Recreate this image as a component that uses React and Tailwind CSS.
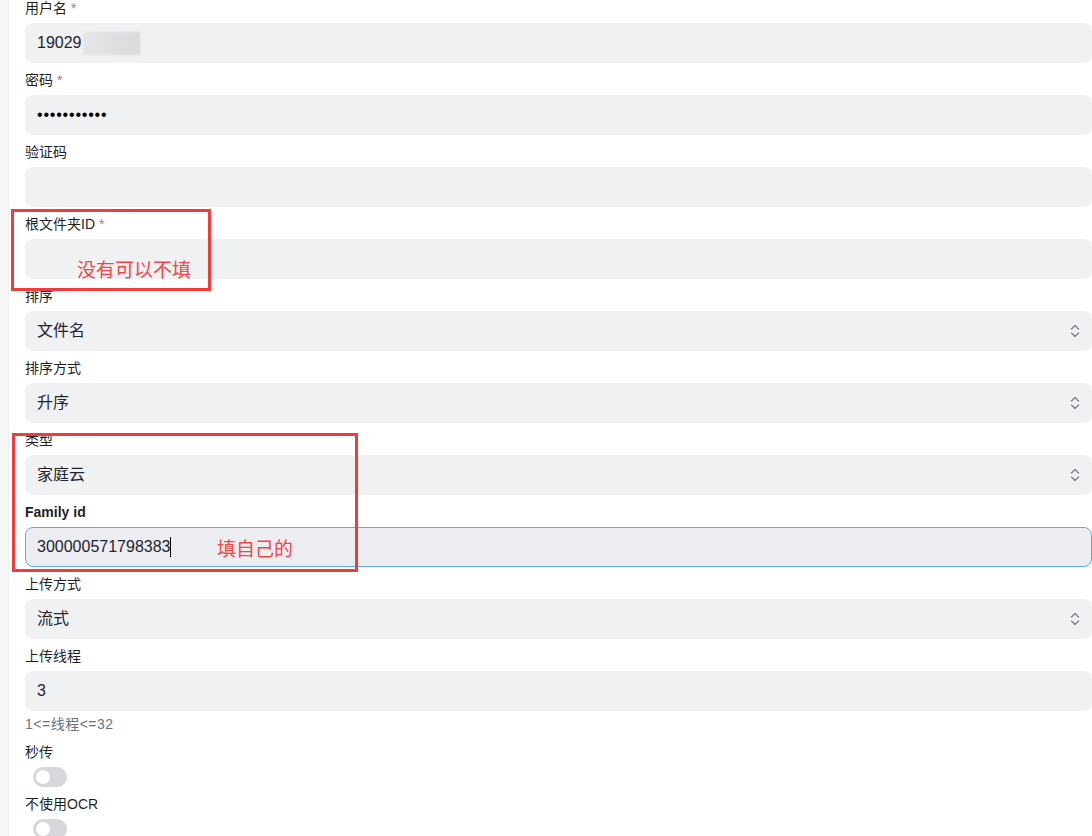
import React from "react";

const font = { fontFamily: '"Liberation Sans", "Noto Sans CJK SC", sans-serif' };

function Label({ children, required, bold }) {
  return (
    <div className={`h-5 leading-5 text-[14px] text-[#1f1f1f] ${bold ? "font-bold" : ""}`}>
      {children}
      {required && <span className="ml-1 text-[#f05a5a]">*</span>}
    </div>
  );
}

function Chevrons() {
  return (
    <svg width="10" height="14" viewBox="0 0 10 14" fill="none" stroke="#7b818a" strokeWidth="1.4" strokeLinecap="round" strokeLinejoin="round">
      <path d="M1.5 5 L5 1.5 L8.5 5" />
      <path d="M1.5 9 L5 12.5 L8.5 9" />
    </svg>
  );
}

function Field({ label, required, bold, children, last }) {
  return (
    <div className={last ? "" : "mb-[7px]"}>
      <Label required={required} bold={bold}>{label}</Label>
      <div className="mt-[5px]">{children}</div>
    </div>
  );
}

function TextBox({ children, focused }) {
  return (
    <div
      className={`h-10 rounded-lg px-3 flex items-center text-[16px] text-[#1f2430] ${
        focused ? "bg-[#ebedf0] border border-[#63a8e8] pl-[11px]" : "bg-[#f0f1f3]"
      }`}
    >
      {children}
    </div>
  );
}

function SelectBox({ value }) {
  return (
    <div className="h-10 rounded-lg bg-[#f0f1f3] pl-3 pr-[12px] flex items-center justify-between text-[16px] text-[#1f2430]">
      <span>{value}</span>
      <Chevrons />
    </div>
  );
}

function Toggle() {
  return (
    <div className="ml-2 w-[34px] h-5 rounded-full bg-[#d5d7db] flex items-center">
      <div className="ml-[3px] w-[14px] h-[14px] rounded-full bg-white" />
    </div>
  );
}

export default function App() {
  return (
    <div className="relative h-[836px] overflow-hidden bg-white flex" style={font}>
      <div className="w-[9px] shrink-0 bg-[#f8f8f9] border-r border-[#efeff0]" />
      <div className="flex-1 pl-4 -mt-[2px]">
        <Field label="用户名" required>
          <TextBox>
            <span>19029</span>
            <span className="ml-[1px] w-[57px] h-[23px] bg-gradient-to-r from-[#e6e6e8] to-[#d9d9db] blur-[1px]" />
          </TextBox>
        </Field>
        <Field label="密码" required>
          <TextBox>
            <span className="tracking-[0.8px] text-black">•••••••••••</span>
          </TextBox>
        </Field>
        <Field label="验证码">
          <TextBox />
        </Field>
        <Field label="根文件夹ID" required>
          <TextBox />
        </Field>
        <Field label="排序">
          <SelectBox value="文件名" />
        </Field>
        <Field label="排序方式">
          <SelectBox value="升序" />
        </Field>
        <Field label="类型">
          <SelectBox value="家庭云" />
        </Field>
        <Field label="Family id" bold>
          <TextBox focused>
            <span>300000571798383</span>
            <span className="w-px h-5 bg-black" />
          </TextBox>
        </Field>
        <Field label="上传方式">
          <SelectBox value="流式" />
        </Field>
        <Field label="上传线程" last>
          <TextBox>3</TextBox>
        </Field>
        <div className="mt-[5px] h-4 leading-4 text-[14px] tracking-[0.5px] text-[#6b7280]">1&lt;=线程&lt;=32</div>
        <div className="mt-[10px]">
          <Label>秒传</Label>
          <div className="mt-[5px]"><Toggle /></div>
        </div>
        <div className="mt-[7px]">
          <Label>不使用OCR</Label>
          <div className="mt-[5px]"><Toggle /></div>
        </div>
      </div>

      {/* annotations */}
      <div className="absolute left-[11px] top-[209px] w-[200px] h-[82px] border-[3px] border-[#f03c3c]" />
      <div className="absolute left-[77px] top-[259px] text-[19px] leading-6 text-[#f04646]">没有可以不填</div>
      <div className="absolute left-[12px] top-[433px] w-[346px] h-[139px] border-[3px] border-[#f03c3c]" />
      <div className="absolute left-[217px] top-[538px] text-[19px] leading-6 text-[#f04646]">填自己的</div>
    </div>
  );
}
